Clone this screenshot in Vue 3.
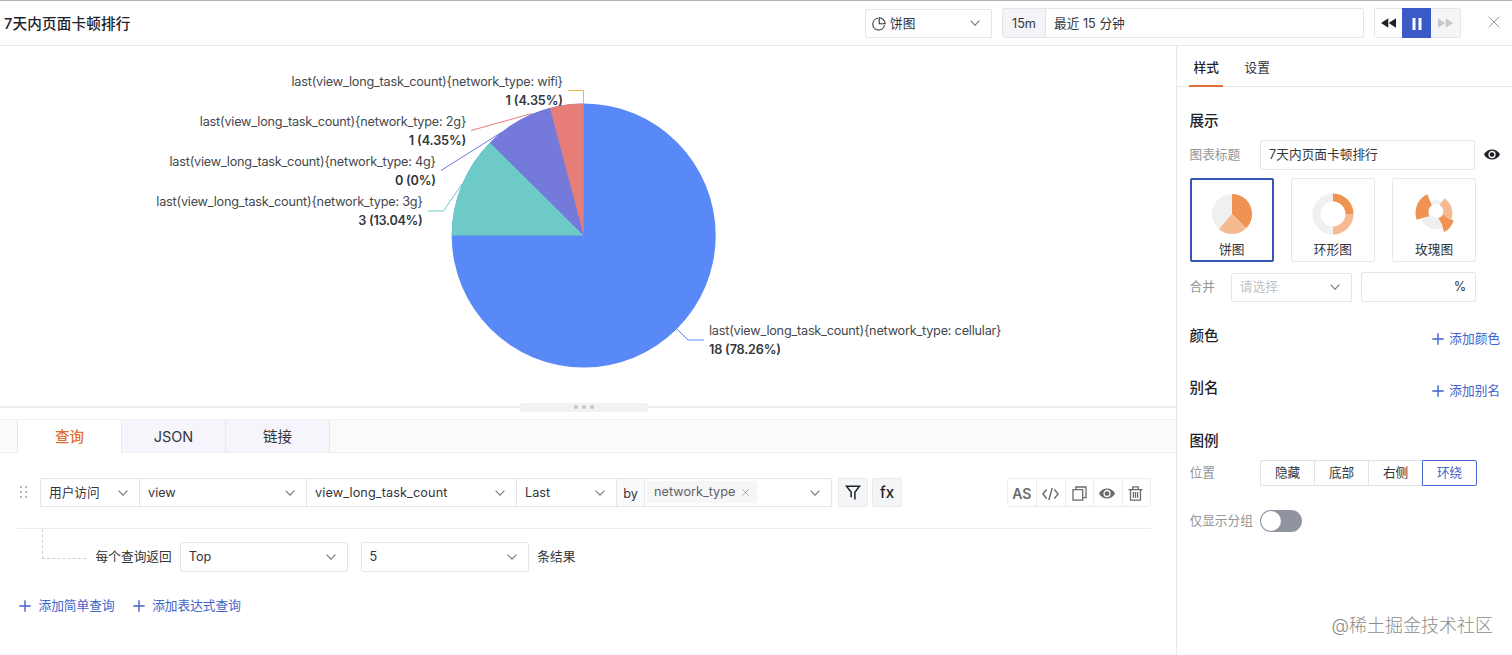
<template>
  <div class="page">
    <!-- Header -->
    <header class="header">
      <h1 class="title">7天内页面卡顿排行</h1>
      <div class="select type-select">
        <svg class="pie-icon" width="14" height="14" viewBox="0 0 14 14" fill="none" stroke="#333" stroke-width="1.1">
          <path d="M6 1.3A5.9 5.9 0 1 0 12.5 8.2" />
          <path d="M7.2.8a6 6 0 0 1 6 6h-6z" />
        </svg>
        <span class="label">饼图</span>
        <svg class="arrow" viewBox="0 0 10 6"><path d="M.6.6 5 5.2 9.4.6" /></svg>
      </div>
      <div class="time-picker">
        <span class="time-tag">15m</span>
        <span class="time-text">最近 15 分钟</span>
      </div>
      <div class="player">
        <button class="play-btn">
          <svg width="15" height="10" viewBox="0 0 15 10"><path d="M7.3.3v9.4L0 5zM15 .3v9.4L7.7 5z" fill="#1f2329" /></svg>
        </button>
        <button class="play-btn pause">
          <svg width="10" height="12" viewBox="0 0 10 12"><path d="M.5 0h3v12h-3zM6.5 0h3v12h-3z" fill="#fff" /></svg>
        </button>
        <button class="play-btn disabled">
          <svg width="15" height="10" viewBox="0 0 15 10"><path d="M0 .3v9.4L7.3 5zM7.7.3v9.4L15 5z" fill="#c6c8ca" /></svg>
        </button>
      </div>
      <svg class="close" width="12" height="12" viewBox="0 0 12 12"><path d="M.6.6l10.8 10.8M11.4.6.6 11.4" stroke="#999" stroke-width="1" /></svg>
    </header>

    <div class="body">
      <main class="main">
        <!-- Chart -->
        <svg class="chart" width="1176" height="357" viewBox="0 46 1176 357">
          <circle cx="583.7" cy="235.5" r="132" fill="#5889f6" />
          <path
            v-for="s in slices"
            :key="s.color"
            :d="s.d"
            :fill="s.color"
          />
          <g v-for="l in labels" :key="l.name">
            <polyline :points="l.line" :stroke="l.color" fill="none" stroke-width="1" />
            <text
              class="name"
              :x="l.x"
              :y="l.y"
              :text-anchor="l.anchor"
              :textLength="l.width"
            >{{ l.name }}</text>
            <text
              class="value"
              :x="l.x"
              :y="l.y + 18.8"
              :text-anchor="l.anchor"
              :textLength="l.valueWidth"
            >{{ l.value }}</text>
          </g>
        </svg>

        <div class="splitter">
          <div class="handle"><i></i><i></i><i></i></div>
        </div>

        <!-- Query tabs -->
        <nav class="tabs">
          <span
            v-for="(tab, index) in tabs"
            :key="tab"
            class="tab"
            :class="{ active: index === activeTab }"
            @click="activeTab = index"
          >{{ tab }}</span>
        </nav>

        <!-- Query row -->
        <div class="query-row">
          <div class="drag"><i v-for="n in 6" :key="n"></i></div>
          <div
            v-for="field in fields"
            :key="field.text"
            class="select joined"
            :class="field.cls"
          >
            <span class="label">{{ field.text }}</span>
            <svg class="arrow" viewBox="0 0 10 6"><path d="M.6.6 5 5.2 9.4.6" /></svg>
          </div>
          <span class="by">by</span>
          <div class="select joined group-by">
            <span class="tag">network_type
              <svg width="7" height="7" viewBox="0 0 8 8"><path d="M.5.5l7 7M7.5.5l-7 7" stroke="#999" /></svg>
            </span>
            <svg class="arrow" viewBox="0 0 10 6"><path d="M.6.6 5 5.2 9.4.6" /></svg>
          </div>
          <button class="square filter">
            <svg width="16" height="15" viewBox="0 0 16 15" fill="none" stroke="#1f2329" stroke-width="1.5">
              <path d="M6.2 12.3V7.2L1.5 1.2h13L9.9 7.2v7.3" />
            </svg>
          </button>
          <button class="square fx">fx</button>
          <div class="tools">
            <span class="tool as">AS</span>
            <span class="tool">
              <svg width="17" height="14" viewBox="0 0 17 14" fill="none" stroke="#6b6b6b" stroke-width="1.4">
                <path d="M4.6 2.5.9 7l3.7 4.5M12.4 2.5 16.1 7l-3.7 4.5M10.2 1 6.8 13" />
              </svg>
            </span>
            <span class="tool">
              <svg width="15" height="15" viewBox="0 0 15 15" fill="none" stroke="#6b6b6b" stroke-width="1.3">
                <path d="M1 3.7h9.7v10.5H1z" />
                <path d="M3.8 3.5V1H14v10.6h-3" />
              </svg>
            </span>
            <span class="tool">
              <svg width="16" height="11" viewBox="0 0 16 11">
                <path d="M0 5.5C1.8 2.2 4.7.5 8 .5s6.2 1.7 8 5c-1.8 3.3-4.7 5-8 5s-6.2-1.7-8-5z" fill="#6b6b6b" />
                <circle cx="8" cy="5.5" r="3" fill="none" stroke="#fff" stroke-width="1.3" />
              </svg>
            </span>
            <span class="tool">
              <svg width="15" height="15" viewBox="0 0 15 15" fill="none" stroke="#6b6b6b" stroke-width="1.3">
                <path d="M.5 3.7h14M4.8 3.5V.9h5.4v2.6M2.5 3.9v10.3h10V3.9M5.4 6v5.8M7.5 6v5.8M9.6 6v5.8" />
              </svg>
            </span>
          </div>
        </div>

        <!-- Top N -->
        <div class="top-row">
          <span class="branch"></span>
          <span class="before">每个查询返回</span>
          <div class="select limit">
            <span class="label">Top</span>
            <svg class="arrow" viewBox="0 0 10 6"><path d="M.6.6 5 5.2 9.4.6" /></svg>
          </div>
          <div class="select limit">
            <span class="label">5</span>
            <svg class="arrow" viewBox="0 0 10 6"><path d="M.6.6 5 5.2 9.4.6" /></svg>
          </div>
          <span class="after">条结果</span>
        </div>

        <div class="add-row">
          <a class="add" v-for="text in ['添加简单查询', '添加表达式查询']" :key="text">
            <svg width="12" height="12" viewBox="0 0 12 12"><path d="M6 .3v11.4M.3 6h11.4" /></svg>{{ text }}
          </a>
        </div>
      </main>

      <!-- Settings panel -->
      <aside class="side">
        <div class="side-tabs">
          <span class="side-tab active">样式</span>
          <span class="side-tab">设置</span>
        </div>
        <div class="side-content">
          <h2>展示</h2>
          <div class="row title-row">
            <span class="row-label">图表标题</span>
            <div class="input title-input">7天内页面卡顿排行</div>
            <svg class="eye" width="16" height="11" viewBox="0 0 16 11">
              <path d="M0 5.5C1.8 2.2 4.7.5 8 .5s6.2 1.7 8 5c-1.8 3.3-4.7 5-8 5s-6.2-1.7-8-5z" fill="#1f2329" />
              <circle cx="8" cy="5.5" r="3" fill="none" stroke="#fff" stroke-width="1.3" />
            </svg>
          </div>

          <div class="cards">
            <div class="card active">
              <svg width="42" height="42" viewBox="-21 -21 42 42">
                <circle r="20" fill="#f0f0f0" />
                <path d="M0 0V-20A20 20 0 0 1 14.14 14.14z" fill="#f09352" />
                <path d="M0 0 14.14 14.14A20 20 0 0 1-13 15.2z" fill="#f6ba92" />
              </svg>
              <span>饼图</span>
            </div>
            <div class="card">
              <svg width="42" height="42" viewBox="-21 -21 42 42" fill="none" stroke-width="8">
                <path d="M0 16.5A16.5 16.5 0 0 1 0-16.5" stroke="#f0f0f0" />
                <path d="M0-16.5A16.5 16.5 0 0 1 16.5 0" stroke="#f09352" />
                <path d="M16.5 0A16.5 16.5 0 0 1 0 16.5" stroke="#f6ba92" />
              </svg>
              <span>环形图</span>
            </div>
            <div class="card">
              <svg width="42" height="42" viewBox="-21 -21 42 42">
                <circle cx="2" cy="-2.8" r="9" fill="none" stroke="#f2f2f2" stroke-width="4" />
                <path d="M-13 5.5C-8 14-1 17 8.6 14.4L5.3 3.5-4 2z" fill="#f0f0f0" />
                <path d="M-17.5 5.8C-20.5-6-16-15.5-6.7-19.8L-2.2-8.8C-5.5-6.5-6.2-2.5-4.9 2.2z" fill="#f09352" />
                <path d="M10.5-15.8C17.5-11 20-3 17.6 5.2L8.3 2.5C10.3-2.5 9.5-7 5.3-9z" fill="#f6ba92" />
                <path d="M4.5 4Q7.5 3.5 8.8.8 13 4.5 19.7 6.4 17 14.5 10 18.3 8.5 10 4.5 4z" fill="#f09352" />
                <circle cx="2" cy="-2.8" r="6.6" fill="#fff" />
              </svg>
              <span>玫瑰图</span>
            </div>
          </div>

          <div class="row merge-row">
            <span class="row-label">合并</span>
            <div class="select merge-select">
              <span class="label">请选择</span>
              <svg class="arrow" viewBox="0 0 10 6"><path d="M.6.6 5 5.2 9.4.6" /></svg>
            </div>
            <div class="input percent">%</div>
          </div>

          <div class="section" v-for="s in sections" :key="s.title">
            <h2>{{ s.title }}</h2>
            <a class="add">
              <svg width="12" height="12" viewBox="0 0 12 12"><path d="M6 .3v11.4M.3 6h11.4" /></svg>{{ s.action }}
            </a>
          </div>

          <h2 class="legend-title">图例</h2>
          <div class="row position-row">
            <span class="row-label">位置</span>
            <div class="radio-group">
              <span
                v-for="p in positions"
                :key="p"
                class="radio"
                :class="{ active: p === position }"
                @click="position = p"
              >{{ p }}</span>
            </div>
          </div>
          <div class="row switch-row">
            <span class="row-label">仅显示分组</span>
            <button class="switch" :class="{ on: onlyGroup }" @click="onlyGroup = !onlyGroup"></button>
          </div>
        </div>
      </aside>
    </div>

    <div class="watermark">@稀土掘金技术社区</div>
  </div>
</template>

<script setup>
import { ref } from 'vue';

const tabs = ['查询', 'JSON', '链接'];
const activeTab = ref(0);

const fields = [
  { text: '用户访问', cls: 'source' },
  { text: 'view', cls: 'table' },
  { text: 'view_long_task_count', cls: 'metric' },
  { text: 'Last', cls: 'func' }
];

const sections = [
  { title: '颜色', action: '添加颜色' },
  { title: '别名', action: '添加别名' }
];

const positions = ['隐藏', '底部', '右侧', '环绕'];
const position = ref('环绕');
const onlyGroup = ref(false);

// Pie slices, angles in degrees clockwise from 12 o'clock
const slice = (from, to, color) => {
  const point = (deg) => {
    const a = (deg * Math.PI) / 180;
    return `${583.7 + 132 * Math.sin(a)} ${235.5 - 132 * Math.cos(a)}`;
  };
  return { color, d: `M583.7 235.5L${point(from)}A132 132 0 0 1 ${point(to)}z` };
};

const slices = [
  slice(270, 314.8, '#6dcac6'),
  slice(314.8, 345.2, '#7479da'),
  slice(345.2, 360, '#e77d79')
];

const labels = [
  {
    name: 'last(view_long_task_count){network_type: wifi}',
    value: '1 (4.35%)',
    x: 563, y: 86, width: 271.5, valueWidth: 57.5, anchor: 'end',
    color: '#f1b654', line: '568,90.5 583.5,90.5 583.5,103'
  },
  {
    name: 'last(view_long_task_count){network_type: 2g}',
    value: '1 (4.35%)',
    x: 466.3, y: 126, width: 266.5, valueWidth: 57.5, anchor: 'end',
    color: '#ea7e79', line: '471,130.5 532,113.5'
  },
  {
    name: 'last(view_long_task_count){network_type: 4g}',
    value: '0 (0%)',
    x: 436, y: 166, width: 266.5, valueWidth: 41, anchor: 'end',
    color: '#7479da', line: '441,170.5 502,132'
  },
  {
    name: 'last(view_long_task_count){network_type: 3g}',
    value: '3 (13.04%)',
    x: 422.8, y: 206.4, width: 266.5, valueWidth: 64.5, anchor: 'end',
    color: '#6dcac6', line: '428,211 443.5,211 462,184'
  },
  {
    name: 'last(view_long_task_count){network_type: cellular}',
    value: '18 (78.26%)',
    x: 709, y: 335.2, width: 292.5, valueWidth: 72, anchor: 'start',
    color: '#5889f6', line: '677,329 688,340 704,340'
  }
];
</script>

<style>
body {
  background: #fff;
  overflow: hidden;
}
</style>

<style scoped>
.page,
.page * {
  box-sizing: border-box;
}

.page {
  position: relative;
  width: 1512px;
  height: 655px;
  display: flex;
  flex-direction: column;
  overflow: hidden;
  font-family: Inter, "Noto Sans CJK SC", sans-serif;
  font-size: 12.7px;
  line-height: 20px;
  color: #33363b;
  background: #fff;
}

button {
  padding: 0;
  border: none;
  font-family: inherit;
}

h1,
h2 {
  margin: 0;
  font-size: 14.6px;
  font-weight: 500;
  color: #1f2329;
}

svg {
  flex: none;
}

/* Header */
.header {
  height: 46px;
  flex: none;
  display: flex;
  align-items: center;
  border-top: 1px solid #b3b3b3;
  border-bottom: 1px solid #e8e9ea;
  padding: 0 12px 0 4px;
}

.title {
  flex: 1;
  padding-top: 2px;
  letter-spacing: 0.15px;
}

.select {
  height: 29px;
  display: flex;
  align-items: center;
  border: 1px solid #e3e5e7;
  border-radius: 2px;
  padding: 0 11px 0 8px;
  background: #fff;
}

.select .label {
  flex: 1;
  white-space: nowrap;
}

.arrow {
  width: 10px;
  height: 6px;
  fill: none;
  stroke: #777;
  stroke-width: 1.1;
}

.type-select {
  width: 127px;
  padding-left: 6px;
}

.type-select .label {
  padding-top: 2px;
}

.pie-icon {
  margin: 2px 4px 0 0;
}

.time-picker {
  width: 362px;
  height: 30px;
  margin-left: 10px;
  display: flex;
  border: 1px solid #e3e5e7;
  border-radius: 2px;
  line-height: 29px;
}

.time-tag {
  width: 43px;
  text-align: center;
  background: #f3f3f8;
  border-right: 1px solid #e3e5e7;
}

.time-text {
  padding-left: 8px;
}

.player {
  width: 87px;
  height: 30px;
  margin-left: 10px;
  display: flex;
  border: 1px solid #e3e5e7;
  border-radius: 2px;
}

.play-btn {
  flex: 1;
  display: flex;
  align-items: center;
  justify-content: center;
  background: #fff;
}

.play-btn:first-child {
  flex: none;
  width: 27px;
}

.play-btn.pause {
  margin: -1px 0;
  padding-top: 2px;
  background: #3a5bc7;
}

.play-btn.disabled {
  background: #f4f5f6;
}

.close {
  margin: -3px 0 0 27px;
}

/* Main */
.body {
  flex: 1;
  display: flex;
  min-height: 0;
}

.main {
  width: 1176px;
  display: flex;
  flex-direction: column;
}

.chart {
  display: block;
}

.chart text {
  font-size: 12.7px;
  fill: #45494e;
}

.chart .value {
  font-weight: 600;
  fill: #33363b;
}

.splitter {
  height: 16px;
  flex: none;
  display: flex;
  justify-content: center;
  background: linear-gradient(#ebedee, #ebedee) 0 3px / 100% 2px no-repeat;
}

.handle {
  width: 130px;
  height: 9px;
  margin-left: -8px;
  display: flex;
  align-items: center;
  justify-content: center;
  gap: 4px;
  border-radius: 5px;
  background: #f1f2f3;
}

.handle i {
  width: 4px;
  height: 4px;
  margin-top: -1px;
  border-radius: 50%;
  background: #c2c4c7;
}

.tabs {
  height: 34px;
  flex: none;
  display: flex;
  padding-left: 17px;
  background: #fafbfb;
  border-top: 1px solid #f0f1f3;
  box-shadow: inset 0 -1px #eceef0;
}

.tab {
  width: 104px;
  border-right: 1px solid #e6e8eb;
  background: #f5f5fb;
  box-shadow: inset 0 -1px #eceef0;
  font-size: 14.5px;
  line-height: 34px;
  text-align: center;
}

.tab.active {
  width: 105px;
  border-left: 1px solid #e6e8eb;
  background: #fff;
  box-shadow: none;
  color: #e0702f;
  font-weight: 500;
}

.query-row {
  height: 76px;
  flex: none;
  margin: 0 25px 0 17px;
  padding-top: 25px;
  display: flex;
  align-items: flex-start;
  border-bottom: 1px solid #ebeced;
}

.drag {
  width: 8px;
  margin: 8px 12px 0 3px;
  display: grid;
  grid-template-columns: 2px 2px;
  gap: 3px;
}

.drag i {
  width: 2px;
  height: 2px;
  background: #b5b7ba;
}

.joined {
  margin-right: -1px;
  border-radius: 0;
}

.source {
  width: 100px;
}

.table {
  width: 168px;
}

.metric {
  width: 211px;
}

.metric .label {
  letter-spacing: 0.1px;
}

.func {
  width: 101px;
}

.by {
  width: 29px;
  height: 29px;
  margin-right: -1px;
  border: 1px solid #e3e5e7;
  background: #f9fafb;
  text-align: center;
  line-height: 30px;
}

.group-by {
  width: 188px;
  margin-right: 6px;
  padding-left: 2px;
  justify-content: space-between;
}

.tag {
  height: 22px;
  display: flex;
  align-items: center;
  gap: 7px;
  margin-top: -1px;
  padding: 0 8px 0 7px;
  background: #f6f6f6;
  color: #606266;
}

.square {
  width: 30px;
  height: 29px;
  display: flex;
  align-items: center;
  justify-content: center;
  border: 1px solid #e8eaed;
  border-radius: 2px;
  background: #f3f5f6;
}

.filter {
  margin-right: 4px;
}

.fx {
  font-size: 15px;
  font-weight: 500;
  color: #1f2329;
}

.tools {
  height: 29px;
  display: flex;
  margin-left: auto;
  border: 1px solid #ececec;
  border-radius: 3px;
}

.tool {
  width: 28.4px;
  display: flex;
  align-items: center;
  justify-content: center;
  padding: 2px 1px 0 0;
}

.tool + .tool {
  border-left: 1px solid #ececec;
}

.as {
  font-size: 14px;
  font-weight: 600;
  color: #6b6b6b;
}

.top-row {
  height: 43px;
  display: flex;
  align-items: flex-end;
  padding-left: 42px;
}

.branch {
  width: 44px;
  height: 30px;
  align-self: flex-start;
  border-left: 1px dashed #cfd1d4;
  border-bottom: 1px dashed #cfd1d4;
}

.before {
  margin: 0 8px 5px 9.6px;
}

.after {
  margin: 0 0 5px -4px;
}

.limit {
  width: 168.5px;
  height: 30px;
  margin-right: 12.3px;
}

.add-row {
  display: flex;
  gap: 18px;
  margin: 24px 0 0 19px;
}

.add {
  display: flex;
  align-items: center;
  gap: 7.5px;
  color: #4163c9;
}

.add svg {
  stroke: #4163c9;
  stroke-width: 1.4;
}

/* Side panel */
.side {
  flex: 1;
  border-left: 1px solid #e6e8ea;
}

.side-tabs {
  height: 41px;
  display: flex;
  gap: 17px;
  padding-left: 12px;
  border-bottom: 1px solid #e8e9ea;
}

.side-tab {
  height: 41px;
  padding: 0 4.6px;
  line-height: 43px;
  white-space: nowrap;
}

.side-tab.active {
  width: 34px;
  border-bottom: 2px solid #df6f37;
  font-weight: 500;
  color: #1f2329;
}

.side-content {
  padding: 24px 12px 0 12.5px;
}

.row {
  display: flex;
  align-items: center;
}

.row-label {
  width: 70.6px;
  color: #94979b;
  white-space: nowrap;
}

.input {
  height: 30px;
  border: 1px solid #e3e5e7;
  border-radius: 2px;
  line-height: 28px;
}

.title-row {
  margin-top: 9px;
}

.title-input {
  width: 215px;
  padding-left: 8px;
}

.eye {
  margin: -1px 0 0 9px;
}

.cards {
  display: flex;
  gap: 16.8px;
  margin-top: 8px;
}

.card {
  width: 84.4px;
  height: 84px;
  display: flex;
  flex-direction: column;
  align-items: center;
  padding-top: 14px;
  border: 1px solid #e6e7e9;
  border-radius: 2px;
}

.card.active {
  padding-top: 13px;
  border: 2px solid #3557bd;
}

.card span {
  margin-top: 5px;
}

.merge-row {
  margin-top: 10px;
}

.merge-row .row-label {
  width: 41.3px;
}

.merge-select {
  width: 121px;
  margin-right: 9px;
}

.merge-select .label {
  color: #bfc1c4;
}

.percent {
  width: 115.5px;
  padding-right: 9px;
  text-align: right;
}

.section {
  height: 20px;
  margin-top: 32.6px;
  display: flex;
  justify-content: space-between;
}

.merge-row + .section {
  margin-top: 23.6px;
}

.section .add {
  margin-top: 6.4px;
  gap: 5.5px;
}

.legend-title {
  margin-top: 32.8px;
}

.position-row {
  margin-top: 9px;
}

.radio-group {
  display: flex;
}

.radio {
  width: 54px;
  height: 26px;
  border: 1px solid #e0e2e4;
  border-right: none;
  text-align: center;
  line-height: 24px;
}

.radio:first-child {
  border-radius: 2px 0 0 2px;
}

.radio.active {
  width: 55px;
  border: 1px solid #4565cf;
  border-radius: 0 2px 2px 0;
  color: #4565cf;
}

.switch-row {
  margin-top: 24px;
}

.switch {
  width: 42px;
  height: 22px;
  padding: 1px;
  border-radius: 11px;
  background: #8f949f;
}

.switch::before {
  content: "";
  display: block;
  width: 20px;
  height: 20px;
  border-radius: 50%;
  background: #fff;
}

.switch.on {
  background: #3a5bc7;
}

.switch.on::before {
  margin-left: 20px;
}

.watermark {
  position: absolute;
  right: 19px;
  bottom: 17px;
  font-size: 18px;
  line-height: 24px;
  font-weight: 300;
  color: #8c8c8c;
}
</style>
